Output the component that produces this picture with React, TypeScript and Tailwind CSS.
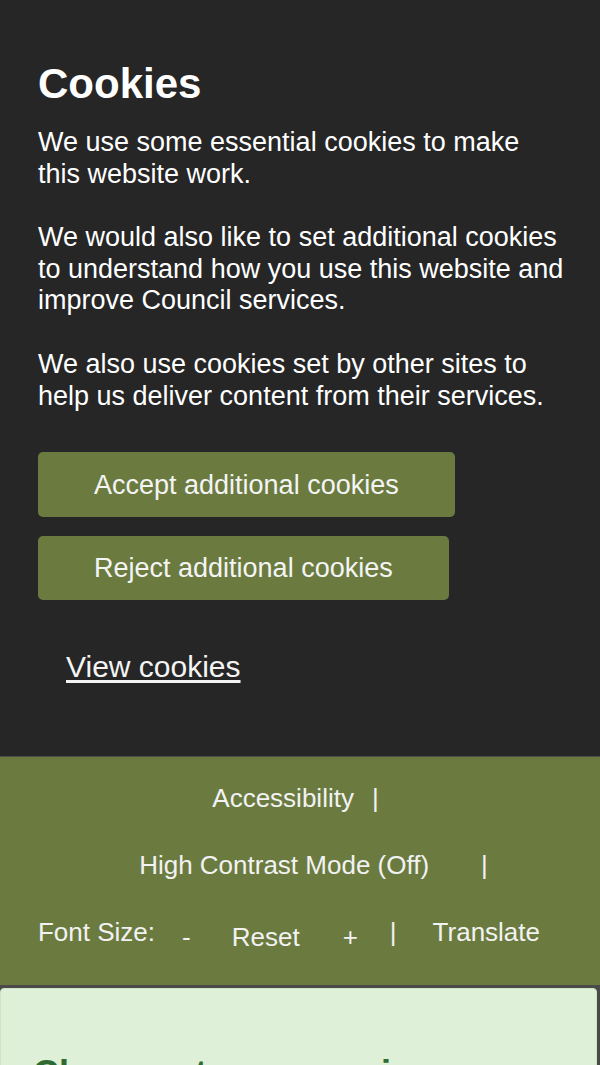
import React from "react";

export default function App() {
  const font = { fontFamily: '"Liberation Sans", Arial, sans-serif' };
  return (
    <div className="w-[600px] min-h-[1065px] bg-[#4a4a4a] overflow-hidden" style={font}>
      {/* Cookie banner */}
      <section className="bg-[#262626] text-white pt-[59px] pb-[71px] pl-[38px] pr-[35px] border-b border-[#4f4f4f]">
        <h2 className="text-[42px] leading-[50px] font-bold mb-[18px]">Cookies</h2>
        <p className="text-[27px] leading-[31.6px] mb-[32px]">
          We use some essential cookies to make this website work.
        </p>
        <p className="text-[27px] leading-[31.6px] mb-[32px]">
          We would also like to set additional cookies to understand how you use this website and improve Council services.
        </p>
        <p className="text-[27px] leading-[31.6px]">
          We also use cookies set by other sites to help us deliver content from their services.
        </p>
        <div className="flex flex-col items-start gap-[19px] mt-[40px]">
          <button className="h-[65px] px-[56px] rounded-[5px] bg-[#6b7b40] text-[27px] leading-[32px] text-[#f4f4f4]">
            Accept additional cookies
          </button>
          <button className="h-[64px] px-[56px] rounded-[5px] bg-[#6b7b40] text-[27px] leading-[32px] text-[#f4f4f4]">
            Reject additional cookies
          </button>
        </div>
        <a href="#" className="block mt-[49px] ml-[28px] text-[30px] leading-[36px] underline underline-offset-[3px] text-[#f4f4f4] w-fit">
          View cookies
        </a>
      </section>

      {/* Accessibility toolbar */}
      <nav className="bg-[#6b7b40] text-[#f2f2f2] text-[26px] leading-[32px] pt-[7px] pb-[20px]">
        <div className="h-[67px] flex items-center justify-center">
          <span>Accessibility</span>
          <span className="ml-[18px] mr-[9px]">|</span>
        </div>
        <div className="h-[67px] flex items-center justify-center">
          <span className="ml-[27px]">High Contrast Mode (Off)</span>
          <span className="ml-[52px]">|</span>
        </div>
        <div className="h-[67px] flex items-center justify-center">
          <span>Font Size:</span>
          <span className="pt-[10px] ml-[27px]">-</span>
          <span className="pt-[10px] ml-[41px]">Reset</span>
          <span className="pt-[10px] ml-[43px]">+</span>
          <span className="ml-[32px]">|</span>
          <span className="ml-[36px] mr-[22px]">Translate</span>
        </div>
      </nav>

      {/* Notice card */}
      <div className="pt-[3px] bg-[#4a4a4a]">
        <div className="bg-[#dff0d8] border border-[#cfe5c4] rounded-t-[4px] mr-[3px] px-[32px] pt-[63px] pb-[30px]">
          <h2 className="text-[36px] leading-[43px] font-bold text-[#2f6b31]">
            Changes to our services
          </h2>
        </div>
      </div>
    </div>
  );
}
